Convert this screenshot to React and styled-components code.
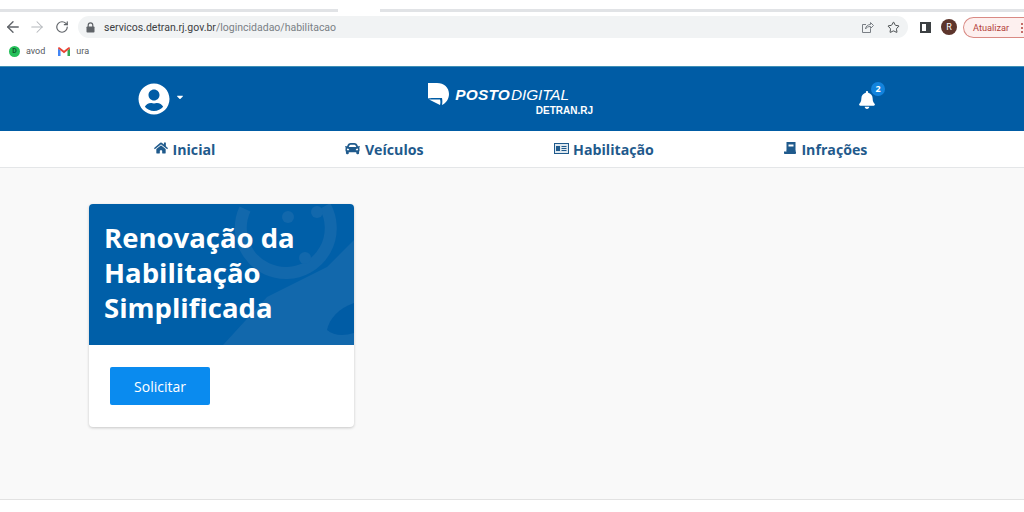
import React from 'react';
import styled, { createGlobalStyle } from 'styled-components';
import { FaHome, FaCar, FaBell, FaUserCircle, FaCaretDown } from 'react-icons/fa';
import { ArrowLeft, ArrowRight, RotateCw, Star } from 'lucide-react';

const Global = createGlobalStyle`
  html, body { margin: 0; padding: 0; background: #fff; }
  body { font-family: "Open Sans", "Noto Sans", sans-serif; }
`;

const Page = styled.div`
  width: 1024px;
  height: 512px;
  overflow: hidden;
  display: flex;
  flex-direction: column;
`;

/* browser chrome */
const TabStrip = styled.div`
  height: 16px;
  box-sizing: border-box;
  padding-top: 9px;
  display: flex;
  gap: 42px;
`;

const TabEdge = styled.div`
  height: 3px;
  width: ${p => p.$w}px;
  flex-grow: ${p => p.$grow || 0};
  background: #e1e3e6;
`;

const Toolbar = styled.div`
  height: 22px;
  display: flex;
  align-items: center;
  padding-left: 4px;
  color: #5f6368;
`;

const NavIcons = styled.div`
  display: flex;
  flex-shrink: 0;
  align-items: center;
  gap: 6px;
  width: 74px;
`;

const Reload = styled.span`
  display: flex;
  margin-left: 3px;
`;

const AddressBar = styled.div`
  width: 830px;
  height: 22px;
  flex-shrink: 0;
  border-radius: 11px;
  background: #f1f3f4;
  display: flex;
  align-items: center;
  padding: 0 8px;
  box-sizing: border-box;
  font-family: "Roboto", sans-serif;
  font-size: 10.5px;
  color: #7a7f85;
`;

const Url = styled.span`
  margin-left: 9px;
  flex: 1;
  b { font-weight: 400; color: #3c4043; }
`;

const BarActions = styled.div`
  display: flex;
  align-items: center;
  gap: 13px;
`;

const ToolbarEnd = styled.div`
  display: flex;
  flex-shrink: 0;
  align-items: center;
  margin-left: 12px;
`;

const PanelIcon = styled.div`
  width: 11px;
  height: 11px;
  box-sizing: border-box;
  border: 2px solid #3c4043;
  border-right-width: 5px;
  margin-right: 10px;
`;

const Profile = styled.div`
  width: 16px;
  height: 16px;
  border-radius: 50%;
  background: #5d352c;
  color: #fff;
  font: 9px "Roboto", sans-serif;
  display: flex;
  align-items: center;
  justify-content: center;
  margin-right: 6px;
`;

const UpdateButton = styled.div`
  width: 61px;
  height: 21px;
  box-sizing: border-box;
  border: 1px solid #d98a84;
  border-right: 0;
  border-radius: 11px 0 0 11px;
  background: #fdf0ef;
  color: #b3423c;
  font: 9.2px "Roboto", sans-serif;
  display: flex;
  align-items: center;
  padding-left: 9px;
  position: relative;
`;

const Dots = styled.span`
  position: absolute;
  right: 1px;
  top: 5px;
  width: 2px;
  height: 2px;
  border-radius: 50%;
  background: #b3423c;
  box-shadow: 0 4px 0 #b3423c, 0 8px 0 #b3423c;
`;

const Bookmarks = styled.div`
  height: 28px;
  display: flex;
  align-items: center;
  padding: 0 0 2px 9px;
  box-sizing: border-box;
  font: 9px "Roboto", sans-serif;
  color: #55595e;
`;

const Bookmark = styled.div`
  display: flex;
  align-items: center;
  gap: 6px;
  margin-right: 13px;
`;

const GreenDot = styled.div`
  width: 11px;
  height: 11px;
  border-radius: 50%;
  background: #25c05a;
  color: #0d5a2a;
  font: 700 7px/11px "Roboto", sans-serif;
  text-align: center;
`;

/* site header */
const Header = styled.header`
  height: 65px;
  background: #005ca5;
  border-top: 1px solid #3f8fb5;
  box-sizing: border-box;
  display: flex;
  align-items: center;
  padding: 0 138px;
  color: #fff;
`;

const UserMenu = styled.div`
  display: flex;
  align-items: center;
  width: 290px;
  gap: 5px;
  svg + svg { margin-bottom: 4px; }
`;

const Logo = styled.div`
  display: flex;
  align-items: flex-start;
  gap: 7px;
  width: 430px;
  margin-top: 1px;
`;

const LogoText = styled.div`
  display: flex;
  flex-direction: column;
  align-items: flex-end;
  width: 113px;
  margin-top: 3px;
`;

const LogoTitle = styled.div`
  font-family: "Liberation Sans", sans-serif;
  font-size: 15.4px;
  line-height: 17px;
  font-style: italic;
  white-space: nowrap;
  b { font-weight: 700; letter-spacing: 0.2px; }
  span { font-weight: 400; letter-spacing: -0.1px; margin-left: 1px; }
`;

const LogoSub = styled.div`
  font-family: "Liberation Sans", sans-serif;
  font-weight: 700;
  font-size: 10px;
  line-height: 11px;
  margin-top: 2px;
  margin-right: -24px;
`;

const Bell = styled.div`
  position: relative;
  display: flex;
  margin-top: 1px;
`;

const Badge = styled.span`
  position: absolute;
  top: -9px;
  left: 13px;
  width: 14px;
  height: 14px;
  border-radius: 50%;
  background: #1283dd;
  font-size: 9px;
  font-weight: 700;
  display: flex;
  align-items: center;
  justify-content: center;
`;

/* menu */
const Menu = styled.nav`
  height: 37px;
  box-sizing: border-box;
  background: #fff;
  border-bottom: 1px solid #e4e6e8;
  display: flex;
  align-items: center;
  gap: 130px;
  padding-left: 154px;
`;

const MenuItem = styled.a`
  display: flex;
  align-items: center;
  gap: 4.5px;
  color: #1f5a8c;
  font-size: 14.2px;
  font-weight: 700;
  white-space: nowrap;
  svg { margin-bottom: 2px; }
`;

/* content */
const Content = styled.main`
  height: 332px;
  box-sizing: border-box;
  background: #f9f9f9;
  border-bottom: 1px solid #e2e2e2;
  padding: 36px 0 0 89px;
`;

const Card = styled.section`
  width: 265px;
  height: 223px;
  background: #fff;
  border-radius: 4px;
  overflow: hidden;
  box-shadow: 0 1px 3px rgba(0, 0, 0, 0.2);
`;

const CardHead = styled.div`
  position: relative;
  height: 141px;
  box-sizing: border-box;
  background: #005fa8;
  padding: 16px 15px 0;
  overflow: hidden;
`;

const Watermark = styled.svg`
  position: absolute;
  left: 0;
  top: 0;
`;

const CardTitle = styled.h2`
  position: relative;
  margin: 0;
  color: #fff;
  font-size: 27.5px;
  line-height: 35px;
  font-weight: 700;
`;

const CardBody = styled.div`
  padding: 22px 21px;
`;

const Button = styled.button`
  width: 100px;
  height: 38px;
  border: 0;
  border-radius: 2px;
  background: #0a8bef;
  color: #fff;
  font-family: "Open Sans", sans-serif;
  font-size: 14px;
`;

const LockIcon = () => (
  <svg width="9" height="11" viewBox="0 0 9 11">
    <path d="M2.200 5V3.200a2.300 2.300 0 0 1 4.600 0V5" fill="none" stroke="#5f6368" strokeWidth="1.200" />
    <rect x="0.500" y="4.500" width="8" height="6" rx="0.800" fill="#5f6368" />
  </svg>
);

const LicenseIcon = () => (
  <svg width="15" height="11" viewBox="0 0 15 11">
    <rect x="0.5" y="0.5" width="14" height="10" fill="#dfe8ef" stroke="#1f5a8c" />
    <rect x="2" y="3" width="4" height="5" fill="#1f5a8c" />
    <path d="M7.5 3.5h5M7.5 5.5h5M7.5 7.5h5" stroke="#1f5a8c" strokeWidth="1" />
  </svg>
);

const TicketIcon = () => (
  <svg width="13" height="13" viewBox="0 0 13 13" fill="#1f5a8c">
    <path d="M2.5 0h9v9h-9zM4.5 2.5v2h5v-2z" fillRule="evenodd" />
    <path d="M0 9.5h2.5v-1h9v1H12v1.5c0 .8-.6 1-1 1H1c-.6 0-1-.4-1-1z" />
  </svg>
);

const ShareIcon = () => (
  <svg width="13" height="13" viewBox="0 0 13 13" fill="none" stroke="#7a7f85" strokeWidth="1">
    <path d="M5 3.5H1.5v8h8V8M4.5 8c.3-3 2.5-4.5 5-4.5V1.5l3 3-3 3V5.5C7.5 5.5 5.5 6 4.5 8z" />
  </svg>
);

const GmailIcon = () => (
  <svg width="12" height="9" viewBox="0 0 12 9">
    <path d="M0 1.5V9h2.5V3.5z" fill="#4285f4" />
    <path d="M12 1.5V9H9.5V3.5z" fill="#34a853" />
    <path d="M0 1.5C0 .3 1 0 1.8.5L6 3.8 10.2.5C11 0 12 .3 12 1.5L9.5 3.5 6 6.2 2.5 3.5z" fill="#ea4335" />
  </svg>
);

const LogoMark = () => (
  <svg width="21" height="22" viewBox="0 0 21 22" fill="#fff">
    <path d="M0 0h9c7 0 12 4.500 12 11 0 5-3 9-7 11 .6-3 .4-5 0-7H5c-2 0-4 .2-5 .5z" />
    <path d="M1 16.500h11c.5 1.800.5 3.500 0 5.500z" />
  </svg>
);

export default function App() {
  return (
    <Page>
      <Global />
      <TabStrip>
        <TabEdge $w={338} />
        <TabEdge $w={644} $grow={1} />
      </TabStrip>
      <Toolbar>
        <NavIcons>
          <ArrowLeft size={18} strokeWidth={1.8} />
          <ArrowRight size={18} strokeWidth={1.4} color="#b4b7bb" />
          <Reload><RotateCw size={14} strokeWidth={2} /></Reload>
        </NavIcons>
        <AddressBar>
          <LockIcon />
          <Url><b>servicos.detran.rj.gov.br</b>/logincidadao/habilitacao</Url>
          <BarActions>
            <ShareIcon />
            <Star size={13} color="#3c4043" strokeWidth={1.7} />
          </BarActions>
        </AddressBar>
        <ToolbarEnd>
          <PanelIcon />
          <Profile>R</Profile>
          <UpdateButton>Atualizar<Dots /></UpdateButton>
        </ToolbarEnd>
      </Toolbar>
      <Bookmarks>
        <Bookmark><GreenDot>D</GreenDot>avod</Bookmark>
        <Bookmark><GmailIcon />ura</Bookmark>
      </Bookmarks>

      <Header>
        <UserMenu>
          <FaUserCircle size={32} />
          <FaCaretDown size={10} />
        </UserMenu>
        <Logo>
          <LogoMark />
          <LogoText>
            <LogoTitle><b>POSTO</b><span>DIGITAL</span></LogoTitle>
            <LogoSub>DETRAN.RJ</LogoSub>
          </LogoText>
        </Logo>
        <Bell>
          <FaBell size={18} />
          <Badge>2</Badge>
        </Bell>
      </Header>

      <Menu>
        <MenuItem><FaHome size={14} />Inicial</MenuItem>
        <MenuItem><FaCar size={15} />Veículos</MenuItem>
        <MenuItem><LicenseIcon />Habilitação</MenuItem>
        <MenuItem><TicketIcon />Infrações</MenuItem>
      </Menu>

      <Content>
        <Card>
          <CardHead>
            <Watermark width="265" height="141" viewBox="0 0 265 141" fill="none">
              <path d="M134 141 L178 93 L238 63 L265 36 V141z" fill="#1268ac" />
              <path d="M238 126 C240 115 250 104 265 99 V129 C255 132 245 132 238 126z" fill="#005ca5" />
              <path d="M156 5 A45 45 0 1 0 236 2" stroke="#1268ac" strokeWidth="12" />
              <circle cx="228" cy="8" r="6" fill="#1268ac" />
              <circle cx="199" cy="13" r="6" fill="#1268ac" />
              <circle cx="216" cy="54" r="6" fill="#1268ac" />
            </Watermark>
            <CardTitle>Renovação da<br />Habilitação<br />Simplificada</CardTitle>
          </CardHead>
          <CardBody>
            <Button>Solicitar</Button>
          </CardBody>
        </Card>
      </Content>
    </Page>
  );
}
